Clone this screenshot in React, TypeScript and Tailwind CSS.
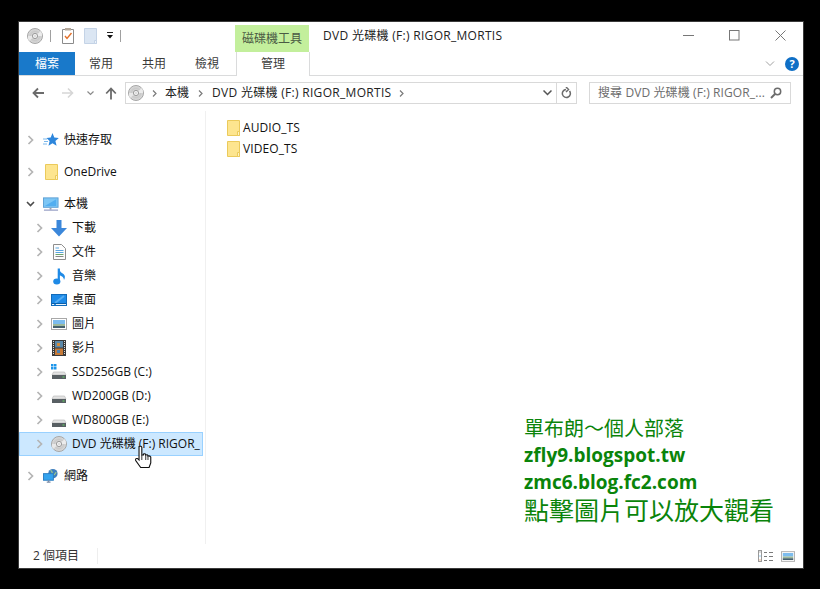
import React from "react";

const Disc = ({ s = 16 }: { s?: number }) => (
  <svg width={s} height={s} viewBox="0 0 16 16" className="shrink-0">
    <defs>
      <radialGradient id="dg" cx="0.5" cy="0.5" r="0.5">
        <stop offset="0" stopColor="#f2f2f2" />
        <stop offset="0.6" stopColor="#c9c9c9" />
        <stop offset="1" stopColor="#dedede" />
      </radialGradient>
    </defs>
    <circle cx="8" cy="8" r="7.5" fill="url(#dg)" stroke="#a6a6a6" />
    <path d="M8 8 L14 3 A7.5 7.5 0 0 1 15 8 Z" fill="#ececec" />
    <path d="M8 8 L2 13 A7.5 7.5 0 0 1 1 8 Z" fill="#e8e8e8" />
    <circle cx="8" cy="8" r="2.6" fill="#f8f8f8" stroke="#9a9a9a" />
    <circle cx="8" cy="8" r="1" fill="#ffffff" stroke="#b5b5b5" strokeWidth="0.5" />
  </svg>
);

const Folder = ({ w = 13, h = 16 }: { w?: number; h?: number }) => (
  <svg width={w} height={h} viewBox="0 0 13 16" className="shrink-0">
    <path d="M0.5 0.5H12.5V15.5H0.5Z" fill="#fde58f" stroke="#ebca5b" />
    <path d="M10.5 11.5H12.5V15.5H10.5Z" fill="#fff3c4" stroke="#ebca5b" />
  </svg>
);

const Chev = ({ open = false }: { open?: boolean }) => (
  <svg width="9" height="10" viewBox="0 0 9 10" className="shrink-0">
    {open ? (
      <path d="M1 3 L4.5 6.5 L8 3" fill="none" stroke="#4b4b4b" strokeWidth="1.6" />
    ) : (
      <path d="M2.5 1 L6.5 5 L2.5 9" fill="none" stroke="#b4b4b4" strokeWidth="1.7" />
    )}
  </svg>
);

const Star = () => (
  <svg width="16" height="16" viewBox="0 0 16 16">
    <path d="M9.5 1 L11.3 5.6 L15.8 6 L12.4 9 L13.6 13.8 L9.5 11.2 L5.5 13.8 L6.6 9 L3.5 6 L7.7 5.6 Z" fill="#2d86dc" />
    <path d="M0 7H4M1 9.5H5M0 12H4" stroke="#7ab8ec" strokeWidth="1" />
  </svg>
);

const Pc = ({ net = false }: { net?: boolean }) =>
  net ? (
    <svg width="17" height="16" viewBox="0 0 17 16">
      <circle cx="10.5" cy="5.5" r="5" fill="#3f7fbd" />
      <path d="M8 2 Q11 4 9 7 Q12 8 14 4" fill="none" stroke="#9fc98a" strokeWidth="1.3" />
      <rect x="0.5" y="5.5" width="10.5" height="7" fill="#33a3ee" stroke="#2a7cc0" />
      <path d="M4 14.5H8M6 12.5V14.5" stroke="#7a8aa5" strokeWidth="1.2" />
    </svg>
  ) : (
    <svg width="17" height="16" viewBox="0 0 17 16">
      <rect x="0.5" y="1.5" width="15.5" height="10" fill="#7cc6f5" stroke="#5c9fd4" />
      <path d="M2 10 L14 3 V10 Z" fill="#52aef0" />
      <path d="M8 12V14" stroke="#9aa4b5" strokeWidth="2" />
      <path d="M1 14.5H16" stroke="#8e97c0" strokeWidth="1.2" />
    </svg>
  );

const Down = () => (
  <svg width="16" height="17" viewBox="0 0 16 17">
    <path d="M5.5 0H10.5V8H16L8 16.5L0 8H5.5Z" fill="#3b87da" />
  </svg>
);

const Doc = () => (
  <svg width="13" height="16" viewBox="0 0 13 16">
    <path d="M0.5 0.5H8.5L12.5 4.5V15.5H0.5Z" fill="#fdfdfd" stroke="#8e8e8e" />
    <path d="M2.5 4H6M2.5 6.5H10.5M2.5 8.5H10.5" stroke="#5aa6e0" />
    <path d="M2.5 10.5H10.5" stroke="#6ea66e" />
    <path d="M2.5 12.5H10.5" stroke="#888" />
  </svg>
);

const Note = () => (
  <svg width="13" height="17" viewBox="0 0 13 17">
    <path d="M5.8 0.5V13" stroke="#1e8ae6" strokeWidth="2.2" />
    <ellipse cx="3.8" cy="13.4" rx="3.6" ry="3" fill="#1e8ae6" />
    <path d="M6 0.5 Q7 4.5 10.5 6 Q13 8 11 12 Q11 8.5 6 7Z" fill="#1e8ae6" />
  </svg>
);

const Desk = () => (
  <svg width="16" height="12" viewBox="0 0 16 12">
    <rect x="0.5" y="0.5" width="15" height="11" fill="#1f8be8" stroke="#136bb8" />
    <path d="M4 9 L13 2" stroke="#55adf2" strokeWidth="2" />
    <path d="M1 9.5H15" stroke="#0c5fa8" />
    <path d="M1 10.5H3M5 10.5H15" stroke="#e6f2fc" />
  </svg>
);

const Pic = ({ w = 16, h = 12 }: { w?: number; h?: number }) => (
  <svg width={w} height={h} viewBox="0 0 16 12">
    <rect x="0.5" y="0.5" width="15" height="11" fill="#fff" stroke="#a8a8a8" />
    <rect x="2" y="2" width="12" height="4" fill="#7cbcee" />
    <rect x="2" y="6" width="12" height="2" fill="#9cb89a" />
    <rect x="2" y="8" width="12" height="2" fill="#44606e" />
  </svg>
);

const Film = () => (
  <svg width="14" height="16" viewBox="0 0 14 16">
    <rect x="0" y="0" width="14" height="16" fill="#3a3a3a" />
    <rect x="3" y="1" width="8" height="6.5" fill="#5b88a8" />
    <rect x="3" y="8.5" width="8" height="6.5" fill="#c67a38" />
    <rect x="5" y="3" width="3" height="3" fill="#d08a3c" />
    <rect x="5" y="10" width="3" height="3" fill="#4d7fae" />
    <path d="M1.5 1V15M12.5 1V15" stroke="#ddd" strokeWidth="1" strokeDasharray="1 1" />
  </svg>
);

const Drive = ({ win = false }: { win?: boolean }) => (
  <svg width="16" height="16" viewBox="0 0 16 16">
    {win && <path d="M0 0H2.5V2.5H0ZM3 0H5.5V2.5H3ZM0 3H2.5V5.5H0ZM3 3H5.5V5.5H3Z" fill="#1e96ea" />}
    <path d="M2.5 8H13.5L15 11H1Z" fill="#e3e3e3" stroke="#b4b4b4" strokeWidth="0.6" />
    <rect x="1" y="11" width="14" height="4" fill="#585f63" />
    <rect x="11.5" y="12.5" width="2" height="1" fill="#62d662" />
  </svg>
);

type Row = { label: string; icon: React.ReactNode; indent?: boolean; open?: boolean; sel?: boolean; mt?: boolean };

const rows: Row[] = [
  { label: "快速存取", icon: <Star /> },
  { label: "OneDrive", icon: <Folder />, mt: true },
  { label: "本機", icon: <Pc />, open: true, mt: true },
  { label: "下載", icon: <Down />, indent: true },
  { label: "文件", icon: <Doc />, indent: true },
  { label: "音樂", icon: <Note />, indent: true },
  { label: "桌面", icon: <Desk />, indent: true },
  { label: "圖片", icon: <Pic />, indent: true },
  { label: "影片", icon: <Film />, indent: true },
  { label: "SSD256GB (C:)", icon: <Drive win />, indent: true },
  { label: "WD200GB (D:)", icon: <Drive />, indent: true },
  { label: "WD800GB (E:)", icon: <Drive />, indent: true },
  { label: "DVD 光碟機 (F:) RIGOR_", icon: <Disc />, indent: true, sel: true },
  { label: "網路", icon: <Pc net />, mt: true },
];

const Crumb = ({ cls }: { cls: string }) => (
  <svg width="5" height="7" viewBox="0 0 5 7" className={cls}>
    <path d="M1 0.5L4 3.5L1 6.5" fill="none" stroke="#7a7a7a" strokeWidth="1.2" />
  </svg>
);

export default function App() {
  const font = "font-['Open_Sans','Noto_Sans_CJK_TC',sans-serif]";
  return (
    <div className={`relative h-[589px] w-[820px] overflow-hidden bg-black pl-[18px] pt-[21px] text-[12px] leading-4 text-[#1a1a1a] ${font}`}>
      <div className="flex h-[548px] w-[786px] flex-col border border-[#3a3a3a] bg-white">
        {/* title bar */}
        <div className="flex h-[30px] shrink-0 items-start">
          <div className="flex items-center pl-[8px] pt-[6px]">
            <Disc />
            <div className="ml-[7px] h-[12px] w-px bg-[#a0a0a0]" />
            <svg width="12" height="16" viewBox="0 0 12 16" className="ml-[11px]">
              <path d="M0.5 1.5H11.5V15.5H0.5Z" fill="#fff" stroke="#8b8b8b" />
              <rect x="3" y="0" width="6" height="2.5" fill="#b5a89a" />
              <path d="M3 8 L5 10.5 L9.5 5" fill="none" stroke="#e2702a" strokeWidth="1.4" />
            </svg>
            <svg width="13" height="16" viewBox="0 0 13 16" className="ml-[10px]">
              <path d="M0.5 0.5H12.5V15.5H0.5Z" fill="#dbe6f3" stroke="#c4d3e6" />
              <path d="M10.5 12.5H12.5V15.5H10.5Z" fill="#eef4fa" stroke="#c4d3e6" />
            </svg>
            <svg width="8" height="8" viewBox="0 0 8 8" className="ml-[9px]">
              <path d="M1 0.5H7" stroke="#222" />
              <path d="M1 3H7L4 6.5Z" fill="#111" />
            </svg>
            <div className="ml-[6px] h-[12px] w-px bg-[#a0a0a0]" />
          </div>
          <div className="ml-[114px] mt-[3px] flex h-[27px] w-[74px] items-center justify-center bg-[#c3ef9c] text-[12px] text-[#4a5a44]">
            磁碟機工具
          </div>
          <div className="ml-[14px] mt-[6px] text-[12px] tracking-[0.3px] text-[#222]">DVD 光碟機 (F:) RIGOR_MORTIS</div>
          <div className="ml-auto flex items-start pt-[8px]">
            <svg width="11" height="11" viewBox="0 0 11 11"><path d="M0 5.5H11" stroke="#777" /></svg>
            <svg width="11" height="11" viewBox="0 0 11 11" className="ml-[35px]"><rect x="0.5" y="0.5" width="9.5" height="9.5" fill="none" stroke="#777" /></svg>
            <svg width="11" height="11" viewBox="0 0 11 11" className="ml-[35px] mr-[17px]"><path d="M0.5 0.5L10.5 10.5M10.5 0.5L0.5 10.5" stroke="#777" /></svg>
          </div>
        </div>
        {/* ribbon tabs */}
        <div className="flex h-[24px] shrink-0 items-stretch border-b border-[#dadbdc]">
          <div className="flex w-[56px] items-center justify-center bg-[#1979ca] text-white">檔案</div>
          <div className="flex w-[52px] items-center justify-center text-[#3b3b3b]">常用</div>
          <div className="flex w-[54px] items-center justify-center text-[#3b3b3b]">共用</div>
          <div className="flex w-[52px] items-center justify-center text-[#3b3b3b]">檢視</div>
          <div className="ml-[3px] flex h-[24px] w-[74px] items-center justify-center border-x border-[#dadbdc] bg-white text-[#3b3b3b]">管理</div>
          <div className="ml-auto flex items-center pr-[4px]">
            <svg width="10" height="6" viewBox="0 0 10 6"><path d="M1 0.5L5 4.5L9 0.5" fill="none" stroke="#a0a0a0" /></svg>
            <div className="ml-[10px] flex h-[14px] w-[14px] items-center justify-center rounded-full bg-[#0f6fc6] text-[11px] font-bold text-white">?</div>
          </div>
        </div>
        {/* address bar */}
        <div className="flex h-[35px] shrink-0 items-start pt-[6px]">
          <div className="flex h-[22px] w-[106px] shrink-0 items-center pl-[13px]">
            <svg width="13" height="12" viewBox="0 0 13 12"><path d="M12 6H2M6 1.5L1.5 6L6 10.5" fill="none" stroke="#6b6b6b" strokeWidth="1.8" /></svg>
            <svg width="13" height="12" viewBox="0 0 13 12" className="ml-[16px]"><path d="M1 6H11M7 1.5L11.5 6L7 10.5" fill="none" stroke="#d6d6d6" strokeWidth="1.6" /></svg>
            <svg width="7" height="5" viewBox="0 0 7 5" className="ml-[13px]"><path d="M0.5 0.5L3.5 3.5L6.5 0.5" fill="none" stroke="#8a8a8a" strokeWidth="1.2" /></svg>
            <svg width="12" height="13" viewBox="0 0 12 13" className="ml-[11px]"><path d="M6 12.5V2M1.2 6.5L6 1.5L10.8 6.5" fill="none" stroke="#6b6b6b" strokeWidth="1.8" /></svg>
          </div>
          <div className="flex h-[22px] w-[452px] shrink-0 items-center border border-[#d9d9d9] text-[#222]">
            <div className="ml-[2px]"><Disc /></div>
            <Crumb cls="ml-[8px]" />
            <span className="ml-[8px]">本機</span>
            <Crumb cls="ml-[9px]" />
            <span className="ml-[9px] tracking-[0.3px]">DVD 光碟機 (F:) RIGOR_MORTIS</span>
            <Crumb cls="ml-[8px]" />
            <svg width="9" height="6" viewBox="0 0 9 6" className="ml-auto mr-[4px]"><path d="M0.5 0.5L4.5 4.5L8.5 0.5" fill="none" stroke="#555" strokeWidth="1.5" /></svg>
            <div className="flex h-full w-[20px] items-center justify-center border-l border-[#d9d9d9]">
              <svg width="11" height="12" viewBox="0 0 11 12"><path d="M8.5 4 A4 4 0 1 1 5 2.5 M5 0 L7.5 2.5 L5 5" fill="none" stroke="#6b6b6b" strokeWidth="1.5" /></svg>
            </div>
          </div>
          <div className="ml-[12px] flex h-[22px] w-[202px] shrink-0 items-center border border-[#d9d9d9] pl-[8px] text-[#6d6d6d]">
            <span className="tracking-[0.1px]">搜尋 DVD 光碟機 (F:) RIGOR_...</span>
            <svg width="12" height="12" viewBox="0 0 12 12" className="ml-auto mr-[8px]"><circle cx="7.5" cy="4.5" r="3.2" fill="none" stroke="#6b6b6b" strokeWidth="1.5" /><path d="M5 7L1 11" stroke="#6b6b6b" strokeWidth="2" /></svg>
          </div>
        </div>
        {/* body */}
        <div className="flex min-h-0 flex-1">
          <div className="w-[187px] shrink-0 border-r border-[#f0f0f0] pt-[17px]">
            {rows.map((r) => (
              <div
                key={r.label}
                className={`flex h-[24px] w-[184px] items-center overflow-hidden whitespace-nowrap border ${r.sel ? "border-[#99d1ff] bg-[#cce8ff]" : "border-transparent"} ${r.mt ? "mt-[8px]" : ""} ${r.indent ? "pl-[15px]" : "pl-[6px]"}`}
              >
                <span className="flex w-[10px] shrink-0"><Chev open={r.open} /></span>
                <span className={`flex w-[16px] shrink-0 justify-center ${r.indent ? "ml-[6px]" : "ml-[7px]"}`}>{r.icon}</span>
                <span className="ml-[5px] text-[#111]">{r.label}</span>
              </div>
            ))}
          </div>
          <div className="flex-1 pl-[21px] pt-[6px]">
            {["AUDIO_TS", "VIDEO_TS"].map((n) => (
              <div key={n} className="flex h-[21px] items-center gap-[3px] text-[#111]">
                <Folder />
                <span className="tracking-[0.1px]">{n}</span>
              </div>
            ))}
          </div>
        </div>
        {/* status bar */}
        <div className="flex h-[24px] shrink-0 items-center pl-[14px] text-[#333]">
          <span>2 個項目</span>
          <div className="ml-[18px] h-[16px] w-px bg-[#eeeeee]" />
          <svg width="16" height="12" viewBox="0 0 16 12" className="ml-auto">
            <rect x="0.5" y="0.5" width="3" height="11" fill="#fff" stroke="#9a9a9a" />
            <rect x="1.5" y="1.5" width="1" height="1" fill="#777" />
            <rect x="1.5" y="5.5" width="1" height="1" fill="#3b9be0" />
            <rect x="1.5" y="9.5" width="1" height="1" fill="#e0702a" />
            <path d="M6 2.5H9M11 2.5H15M6 6.5H9M11 6.5H15M6 10.5H9M11 10.5H15" stroke="#7a7a7a" />
          </svg>
          <div className="ml-[7px] mr-[8px]"><Pic w={14} h={11} /></div>
        </div>
      </div>

      {/* cursor */}
      <svg width="19" height="24" viewBox="0 0 17 24" preserveAspectRatio="none" className="absolute left-[134px] top-[445px]">
        <path d="M4.5 1.5 Q6.5 0.5 7 2.5 V10 H8.5 V9 Q10 8 10.5 10 Q12 9 12.5 11 Q14 10.5 15 12 V18 L13.5 22.5 H6 L1.5 15.5 Q1 13 3 13.5 L4.5 15 Z" fill="#fff" stroke="#111" strokeWidth="1" />
        <path d="M7 10V15M10.5 10V15M12.5 11V15" stroke="#111" strokeWidth="0.8" />
      </svg>

      {/* watermark */}
      <div className="absolute left-[524px] top-[414px] font-['Noto_Sans_CJK_TC',sans-serif] text-[#0a840a]">
        <div className="h-[28px] text-[20px] leading-[28px]">單布朗～個人部落</div>
        <div className="h-[27px] font-['Open_Sans',sans-serif] text-[19px] font-bold leading-[27px]">zfly9.blogspot.tw</div>
        <div className="h-[27px] font-['Open_Sans',sans-serif] text-[19px] font-bold leading-[27px]">zmc6.blog.fc2.com</div>
        <div className="h-[26px] text-[25px] leading-[26px]">點擊圖片可以放大觀看</div>
      </div>
    </div>
  );
}
